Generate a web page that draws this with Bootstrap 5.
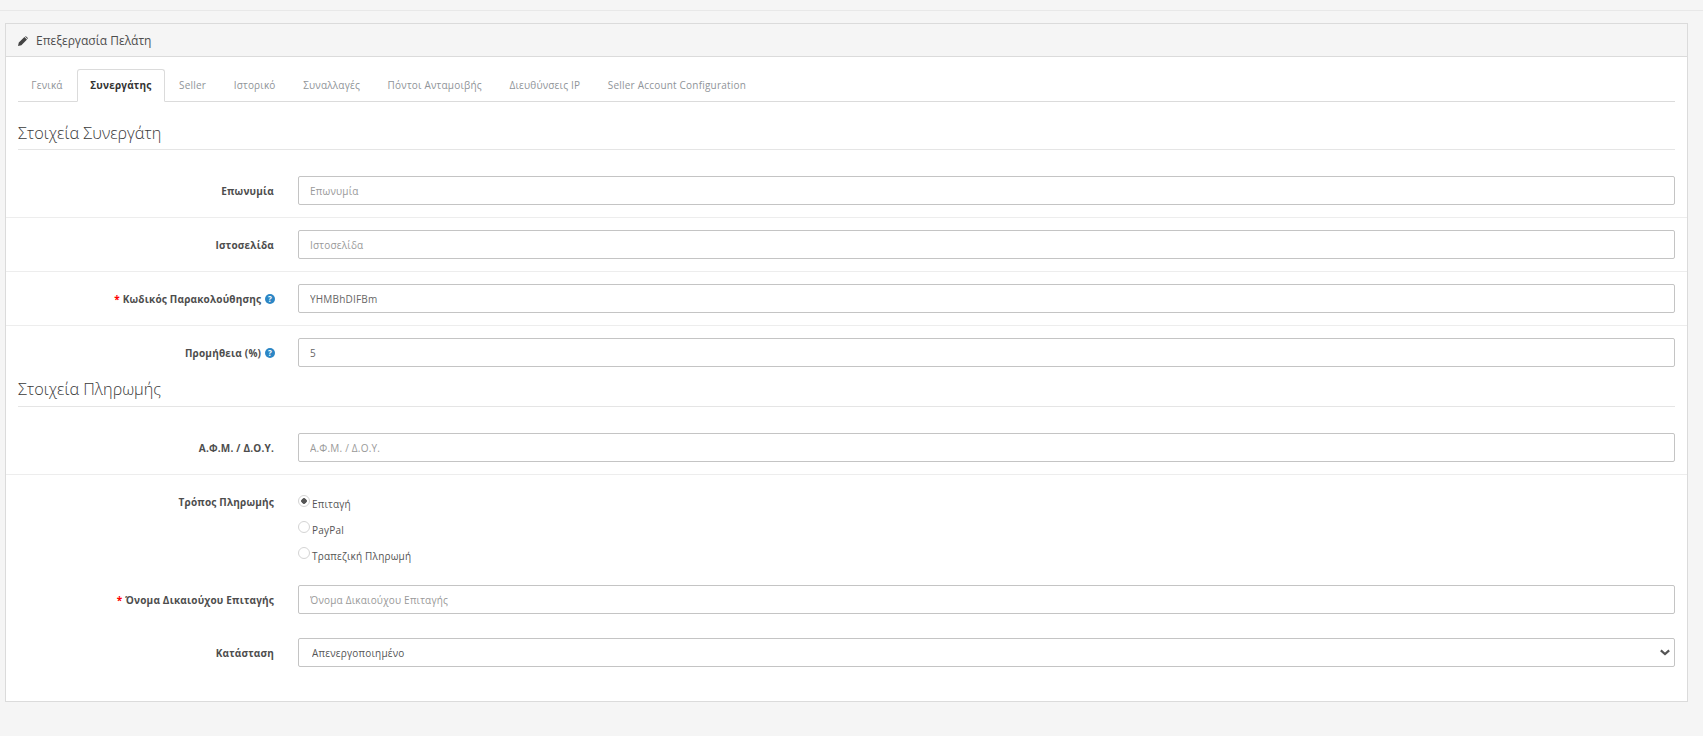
<!DOCTYPE html>
<html lang="el">
<head>
  <meta charset="UTF-8">
  <title>Επεξεργασία Πελάτη</title>
  <link href="https://cdn.jsdelivr.net/npm/bootstrap@5.3.0/dist/css/bootstrap.min.css" rel="stylesheet">
  <script src="https://cdn.jsdelivr.net/npm/bootstrap@5.3.0/dist/js/bootstrap.bundle.min.js"></script>
  <style>
    html, body { height: 736px; overflow: hidden; }
    body { background: #f5f5f5; font-family: "Open Sans", sans-serif; font-size: 10px; color: #4d4d4d; letter-spacing: .2px; }
    .top-strip { height: 11px; border-bottom: 1px solid #e8e8e8; }
    .edit-panel { margin: 12px 15px 0 5px; background: #fff; border: 1px solid #dbdbdb; border-radius: 0; height: 679px; }
    .edit-panel .card-header { height: 33px; padding: 1px 12px 0; background: #f5f5f5; border-bottom: 1px solid #dbdbdb; border-radius: 0; font-size: 12px; color: #4d4d4d; letter-spacing: 0; gap: 8px; }
    .edit-panel .card-body { padding: 12px 12px 0; }
    .edit-tabs { border-bottom: 1px solid #dbdbdb; height: 33px; }
    .edit-tabs .nav-link { height: 32px; padding: 0 12.3px; line-height: 30px; color: #8f9499; border: 1px solid transparent; border-radius: 3px 3px 0 0; font-size: 10px; margin-right: 1px; }
    .edit-tabs .nav-link.active { height: 33px; color: #333; font-weight: 700; border-color: #dbdbdb #dbdbdb #fff; }
    .edit-legend { font-size: 16.25px; font-weight: 300; color: #3a3a3a; letter-spacing: 0; line-height: 22px; border-bottom: 1px solid #e5e5e5; }
    .first-legend { margin-top: 20px; margin-bottom: 26px; padding-bottom: 5px; }
    .second-legend { margin-top: 11px; margin-bottom: 26px; padding-bottom: 6px; }
    .field-row { display: flex; align-items: center; gap: 24px; margin: 0 -12px; padding: 0 12px 0 0; }
    .field-row + .field-row.ruled { border-top: 1px solid #ededed; margin-top: 12px; padding-top: 12px; }
    .field-label { width: 268px; flex: none; text-align: right; font-weight: 700; color: #4d4d4d; margin: 0; padding: 0; line-height: 14px; }
    .req { color: #f00; font-weight: 700; }
    .help-dot { vertical-align: -1px; margin-left: 1px; margin-right: -1px; }
    .edit-panel .form-control, .edit-panel .form-select { height: 29px; min-height: 29px; font-size: 10px; letter-spacing: .2px; padding: 1px 11px 0; color: #666; border: 1px solid #c4c4c4; border-radius: 2px; box-shadow: none; }
    .edit-panel .form-control::placeholder { color: #999; }
    .edit-panel .form-select { background-image: url("data:image/svg+xml,%3csvg xmlns='http://www.w3.org/2000/svg' viewBox='0 0 12 8'%3e%3cpath fill='none' stroke='%23555' stroke-width='2.6' d='M1 1.5l5 4.5 5-4.5'/%3e%3c/svg%3e"); background-size: 10px 7px; background-position: right 4px center; padding-left: 13px; color: #555; }
    .field-row + .field-row.radio-row { align-items: flex-start; padding-top: 20px; }
    .radio-stack { flex: 1; }
    .radio-line { display: flex; align-items: flex-start; height: 26px; color: #555; margin: 0; }
    .radio-line .form-check-input { width: 12px; height: 12px; margin: 0 2px 0 0; border: 1px solid #d4d4d4; background-color: #fff; flex: none; }
    .radio-line .form-check-input:checked { border-color: #d4d4d4; background-color: #fff; background-image: radial-gradient(circle at center, #555 0, #555 2.5px, transparent 3px); }
    .radio-line span { margin-top: 2px; line-height: 14px; }
    .after-radio { margin-top: 12px; }
    .last-row { margin-top: 24px; }
  </style>
</head>
<body>
  <div class="top-strip"></div>

  <div class="card edit-panel">
    <div class="card-header d-flex align-items-center">
      <svg width="10" height="10" viewBox="0 0 10 10"><path fill="#444" d="M0 10 L.8 6.6 L6.4 1 L9 3.6 L3.4 9.2 Z M7 .4 Q7.6 -.1 8.2 .4 L9.6 1.8 Q10.1 2.4 9.6 3 Z"/></svg>
      <span>Επεξεργασία Πελάτη</span>
    </div>
    <div class="card-body">
      <ul class="nav nav-tabs edit-tabs">
        <li class="nav-item"><a class="nav-link" href="#">Γενικά</a></li>
        <li class="nav-item"><a class="nav-link active" href="#">Συνεργάτης</a></li>
        <li class="nav-item"><a class="nav-link" href="#">Seller</a></li>
        <li class="nav-item"><a class="nav-link" href="#">Ιστορικό</a></li>
        <li class="nav-item"><a class="nav-link" href="#">Συναλλαγές</a></li>
        <li class="nav-item"><a class="nav-link" href="#">Πόντοι Ανταμοιβής</a></li>
        <li class="nav-item"><a class="nav-link" href="#">Διευθύνσεις IP</a></li>
        <li class="nav-item"><a class="nav-link" href="#">Seller Account Configuration</a></li>
      </ul>

      <div class="edit-legend first-legend">Στοιχεία Συνεργάτη</div>

      <div class="field-row">
        <label class="field-label">Επωνυμία</label>
        <input class="form-control" placeholder="Επωνυμία">
      </div>
      <div class="field-row ruled">
        <label class="field-label">Ιστοσελίδα</label>
        <input class="form-control" placeholder="Ιστοσελίδα">
      </div>
      <div class="field-row ruled">
        <label class="field-label"><span class="req">*</span> Κωδικός Παρακολούθησης
          <svg class="help-dot" width="10" height="10" viewBox="0 0 10 10"><circle cx="5" cy="5" r="5" fill="#2b86c5"/><text x="5" y="8" text-anchor="middle" font-size="8" font-weight="700" font-family="Open Sans" fill="#fff">?</text></svg>
        </label>
        <input class="form-control" value="YHMBhDIFBm">
      </div>
      <div class="field-row ruled">
        <label class="field-label">Προμήθεια (%)
          <svg class="help-dot" width="10" height="10" viewBox="0 0 10 10"><circle cx="5" cy="5" r="5" fill="#2b86c5"/><text x="5" y="8" text-anchor="middle" font-size="8" font-weight="700" font-family="Open Sans" fill="#fff">?</text></svg>
        </label>
        <input class="form-control" value="5">
      </div>

      <div class="edit-legend second-legend">Στοιχεία Πληρωμής</div>

      <div class="field-row">
        <label class="field-label">Α.Φ.Μ. / Δ.Ο.Υ.</label>
        <input class="form-control" placeholder="Α.Φ.Μ. / Δ.Ο.Υ.">
      </div>
      <div class="field-row ruled radio-row">
        <label class="field-label">Τρόπος Πληρωμής</label>
        <div class="radio-stack">
          <label class="radio-line"><input class="form-check-input" type="radio" name="pay" checked><span>Επιταγή</span></label>
          <label class="radio-line"><input class="form-check-input" type="radio" name="pay"><span>PayPal</span></label>
          <label class="radio-line"><input class="form-check-input" type="radio" name="pay"><span>Τραπεζική Πληρωμή</span></label>
        </div>
      </div>
      <div class="field-row after-radio">
        <label class="field-label"><span class="req">*</span> Όνομα Δικαιούχου Επιταγής</label>
        <input class="form-control" placeholder="Όνομα Δικαιούχου Επιταγής">
      </div>
      <div class="field-row last-row">
        <label class="field-label">Κατάσταση</label>
        <select class="form-select"><option>Απενεργοποιημένο</option></select>
      </div>
    </div>
  </div>
</body>
</html>
